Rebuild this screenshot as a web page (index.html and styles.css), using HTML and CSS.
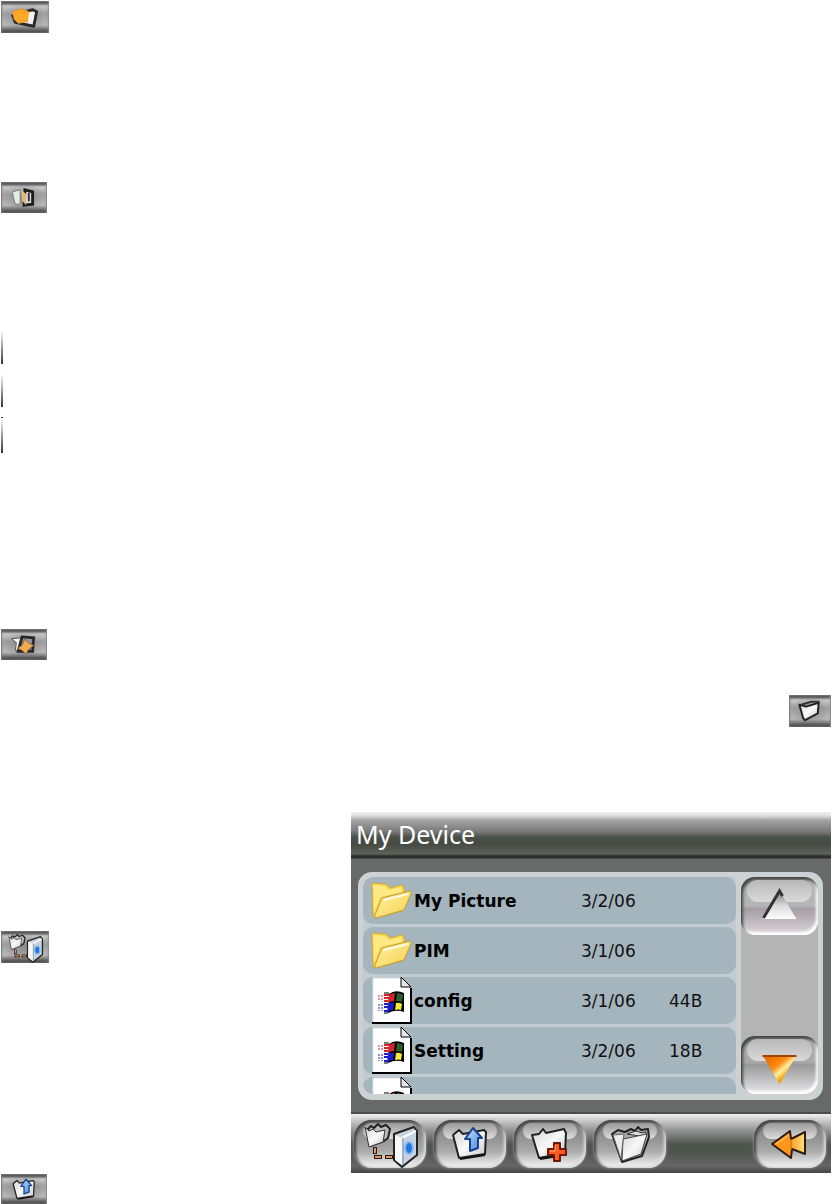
FILE: index.html
```html
<!DOCTYPE html>
<html lang="en">
<head>
  <meta charset="UTF-8">
  <meta name="viewport" content="width=device-width, initial-scale=1.0">
  <title>My Device</title>
  <link rel="stylesheet" href="styles.css">
</head>
<body>
  <!-- shared icon shapes -->
  <svg class="defs" width="0" height="0" aria-hidden="true">
    <defs>
      <linearGradient id="paper" x1="0" y1="0" x2="1" y2="1">
        <stop offset="0" stop-color="#d4d4d6"/>
        <stop offset="0.5" stop-color="#f8f8f8"/>
        <stop offset="1" stop-color="#c3c5c9"/>
      </linearGradient>
      <linearGradient id="blue" x1="0" y1="0" x2="1" y2="1">
        <stop offset="0" stop-color="#c4e0ff"/>
        <stop offset="1" stop-color="#4585da"/>
      </linearGradient>
      <linearGradient id="orange" x1="0" y1="0" x2="1" y2="0">
        <stop offset="0" stop-color="#ff9a1c"/>
        <stop offset="0.5" stop-color="#ff9418"/>
        <stop offset="1" stop-color="#ffe27a"/>
      </linearGradient>
      <linearGradient id="yellow" x1="0" y1="0" x2="1" y2="1">
        <stop offset="0" stop-color="#fff3a6"/>
        <stop offset="1" stop-color="#f5cf4c"/>
      </linearGradient>
      <linearGradient id="flame" x1="0" y1="0" x2="1" y2="1">
        <stop offset="0" stop-color="#e06000"/>
        <stop offset="0.4" stop-color="#ff8c10"/>
        <stop offset="0.55" stop-color="#fff0a0"/>
        <stop offset="0.7" stop-color="#f0a000"/>
      </linearGradient>
      <linearGradient id="silver" x1="0" y1="0" x2="0" y2="1">
        <stop offset="0" stop-color="#777"/>
        <stop offset="0.5" stop-color="#d8d8d8"/>
        <stop offset="1" stop-color="#fff"/>
      </linearGradient>
    </defs>
    <symbol id="folder" viewBox="0 0 42 47">
      <path d="M2 9Q1 7 3 6L16 7L20 11L31 8Q34 8 34 11L35 17L32 34L6 41Q3 41 3 38Z" fill="#f8d64c" stroke="#d0a63c"/>
      <path d="M3 8L15 9L19 13L31 10L32 15L10 20L4 36Z" fill="#ffe983"/>
      <path d="M12 21L40 14Q42 14 41 17L34 33L6 41Q4 41 5 38Z" fill="url(#yellow)" stroke="#c29a38"/>
      <path d="M14 23L38 17" fill="none" stroke="#fffbe0" stroke-width="2"/>
    </symbol>
    <symbol id="file" viewBox="0 0 42 47">
      <path d="M3 1H31L41 11V46H3Z" fill="#fff" stroke="#dde3e6"/>
      <path d="M2 46H41V11" fill="none" stroke="#000" stroke-width="2"/>
      <path d="M31 0V10H41Z" fill="#e5e5e5" stroke="#000"/>
      <path d="M19 17Q25 12 34 16V35Q26 32 18 36Z" fill="#000"/>
      <path d="M19 18Q22 16 25 16L24 24Q21 24 18 26Z" fill="#d8242c"/>
      <path d="M27 16Q30 16 33 18L32 25Q29 24 26 24Z" fill="#27602a"/>
      <path d="M18 27Q21 25 24 26L23 33Q20 33 17 35Z" fill="#1b1bd0"/>
      <path d="M26 26Q29 25 32 27L31 33Q28 32 25 33Z" fill="#f4ec3c"/>
      <path d="M9 18V24M12 18V24" stroke="#d8242c" stroke-width="1" stroke-dasharray="2 1"/>
      <path d="M9 27V34M12 27V34" stroke="#1b1bd0" stroke-width="1" stroke-dasharray="2 1"/>
      <path d="M14 18H19M14 21H19M14 24H18" stroke="#d8242c" stroke-width="2"/>
      <path d="M14 27H18M14 30H18M14 34H18" stroke="#1b1bd0" stroke-width="2"/>
      <path d="M14 16H19M14 36H18" stroke="#000"/>
    </symbol>
    <symbol id="explore" viewBox="0 0 72 48">
      <path d="M14 9L17 6L20 8L24 4L27 7L32 5L36 9L34 18L30 21L16 26Z" fill="#bbb" stroke="#222" stroke-width="2" stroke-linejoin="round"/>
      <path d="M11 7L15 11L19 9L22 12L31 10L29 22L15 27Z" fill="url(#paper)" stroke="#333"/>
      <path d="M21 27V34M20 37H28M31 37H39" stroke="#2a1a12" stroke-width="4"/>
      <path d="M21 28V33M21 37H27M32 37H38" stroke="#e09468" stroke-width="2"/>
      <path d="M40 14L60 7L63 11V35L48 47L40 40Z" fill="#c7d3e0" stroke="#222" stroke-width="2" stroke-linejoin="round"/>
      <path d="M41 15L48 18V45L41 40Z" fill="#f6f9fc"/>
      <path d="M48 18L62 11" stroke="#fff" stroke-width="2"/>
      <path d="M49 18V45" stroke="#7890a8"/>
      <ellipse cx="55" cy="28" rx="4" ry="6" fill="#1f7ae0" stroke="#8ab8ec" stroke-width="2"/>
    </symbol>
    <symbol id="up" viewBox="0 0 72 48">
      <path d="M19 15L25 10L29 14L50 10L52 12L51 34L25 38Z" fill="url(#paper)" stroke="#222" stroke-width="2" stroke-linejoin="round"/>
      <path d="M26 39L51 35" stroke="#111" stroke-width="2"/>
      <path d="M39 8L48 18H44V28L36 31V19H31Z" fill="url(#blue)" stroke="#15418e" stroke-width="2" stroke-linejoin="round"/>
    </symbol>
    <symbol id="new" viewBox="0 0 72 48">
      <path d="M18 15L25 14L29 9L32 13L50 9L52 13L51 33L25 38Z" fill="url(#paper)" stroke="#222" stroke-width="2" stroke-linejoin="round"/>
      <path d="M26 39L44 36" stroke="#111" stroke-width="2"/>
      <path d="M40 23H46V29H52V35H46V41H40V35H34V29H40Z" fill="#ff5a20" stroke="#6e1800" stroke-width="2" stroke-linejoin="round"/>
      <path d="M41 25V31H36" fill="none" stroke="#ffab70"/>
    </symbol>
    <symbol id="open" viewBox="0 0 72 48">
      <path d="M18 14L24 10L31 12L37 9L41 11L44 7L47 10L54 9L55 17L48 36L28 42Z" fill="#a8a8a8" stroke="#222" stroke-width="2" stroke-linejoin="round"/>
      <path d="M33 14L42 11L48 13L52 12L52 17Z" fill="#ddd" stroke="#333"/>
      <path d="M29 19L53 14L47 34L28 41Z" fill="url(#paper)" stroke="#444"/>
      <path d="M19 15L30 14L29 20L27 39Z" fill="#ececec" stroke="#666"/>
    </symbol>
    <symbol id="back" viewBox="0 0 72 48">
      <path d="M18 24L36 11L37 19L51 12V34L38 29L37 38Z" fill="url(#orange)" stroke="#2e1c10" stroke-width="2" stroke-linejoin="round"/>
      <path d="M22 24L35 15" stroke="#ffd48a" stroke-width="1"/>
      <path d="M37 19V30" stroke="#c26a10"/>
    </symbol>
    <symbol id="send" viewBox="0 0 48 32">
      <path d="M24 10L32 8L36 10L33 25L14 21L11 13" fill="#eee" stroke="#2c2824" stroke-width="3" stroke-linejoin="round"/>
      <path d="M11 10L20 7L28 10L27 20L17 22L13 18Z" fill="#ffa726" stroke="#d8923a" stroke-width="1"/>
      <path d="M28 11L34 10L32 21L27 20Z" fill="#f4f2ea"/>
    </symbol>
    <symbol id="copy" viewBox="0 0 48 32">
      <path d="M12 10L20 8V23H15L13 16Z" fill="#dff0df" stroke="#777"/>
      <path d="M25 8L33 10V23L24 24Z" fill="#ddd" stroke="#1c1c1c" stroke-width="3"/>
      <path d="M21 8L26 12V24L22 19Z" fill="#e8b878"/>
      <path d="M29 11V20" stroke="#333" stroke-width="2"/>
    </symbol>
    <symbol id="paste" viewBox="0 0 48 32">
      <path d="M11 10L21 9L19 23L15 22L16 14Z" fill="#f2f2f2" stroke="#555"/>
      <path d="M22 8L34 9L33 23L18 23Z" fill="#9a9a9a" stroke="#2a2a2a" stroke-width="3"/>
      <path d="M25 10L28 14L34 17L29 21L26 26L22 22L17 20L22 17Z" fill="#efad50" stroke="#8c6436"/>
    </symbol>
    <symbol id="page" viewBox="0 0 42 32">
      <path d="M10 9L17 11L30 7L29 18L16 25L14 23Z" fill="url(#paper)" stroke="#222" stroke-width="2" stroke-linejoin="round"/>
      <path d="M12 9L22 6L31 6" fill="none" stroke="#333" stroke-width="2"/>
    </symbol>
  </svg>

  <main class="page">
    <div class="side">
      <button class="thumb first" aria-label="Send"><svg><use href="#send"/></svg></button>
      <button class="thumb copy" aria-label="Copy"><svg><use href="#copy"/></svg></button>
      <div class="edges">
        <span class="edge"></span>
        <span class="edge"></span>
        <span class="edge tall"></span>
      </div>
      <button class="thumb paste" aria-label="Paste"><svg><use href="#paste"/></svg></button>
      <button class="thumb explore" aria-label="Explore"><svg><use href="#explore"/></svg></button>
      <button class="thumb parent" aria-label="Parent folder"><svg><use href="#up"/></svg></button>
    </div>

    <div class="content">
      <button class="thumb open" aria-label="Open"><svg><use href="#page"/></svg></button>

      <section class="device">
        <h1>My Device</h1>
        <div class="body">
          <div class="panel">
            <div class="list">
              <table>
                <tbody>
                  <tr>
                    <td class="icon"><svg><use href="#folder"/></svg></td>
                    <td class="name">My Picture</td>
                    <td class="date">3/2/06</td>
                    <td class="size"></td>
                  </tr>
                  <tr>
                    <td class="icon"><svg><use href="#folder"/></svg></td>
                    <td class="name">PIM</td>
                    <td class="date">3/1/06</td>
                    <td class="size"></td>
                  </tr>
                  <tr>
                    <td class="icon"><svg><use href="#file"/></svg></td>
                    <td class="name">config</td>
                    <td class="date">3/1/06</td>
                    <td class="size">44B</td>
                  </tr>
                  <tr>
                    <td class="icon"><svg><use href="#file"/></svg></td>
                    <td class="name">Setting</td>
                    <td class="date">3/2/06</td>
                    <td class="size">18B</td>
                  </tr>
                  <tr>
                    <td class="icon"><svg><use href="#file"/></svg></td>
                    <td class="name"></td>
                    <td class="date">3/1/06</td>
                    <td class="size"></td>
                  </tr>
                </tbody>
              </table>
            </div>
            <div class="scroll">
              <button class="scroll-up" aria-label="Scroll up">
                <svg viewBox="0 0 76 58"><path d="M38 14L55 42H21Z" fill="url(#silver)"/><path d="M22 41L38 14L41 19" fill="none" stroke="#333" stroke-width="3"/></svg>
              </button>
              <button class="scroll-down" aria-label="Scroll down">
                <svg viewBox="0 0 76 58"><path d="M21 19H55L38 48Z" fill="url(#flame)"/><path d="M21 20H55" stroke="#a04400" stroke-width="2"/></svg>
              </button>
            </div>
          </div>
        </div>
        <nav class="toolbar">
          <button class="tool" aria-label="Explore"><svg><use href="#explore"/></svg></button>
          <button class="tool" aria-label="Parent folder"><svg><use href="#up"/></svg></button>
          <button class="tool" aria-label="New folder"><svg><use href="#new"/></svg></button>
          <button class="tool" aria-label="Open"><svg><use href="#open"/></svg></button>
          <button class="tool back" aria-label="Back"><svg><use href="#back"/></svg></button>
        </nav>
      </section>
    </div>
  </main>
</body>
</html>
```
FILE: styles.css
```css
body {
  margin: 0;
  background: #fff;
  font-family: "DejaVu Sans", sans-serif;
}
button {
  border: none;
  padding: 0;
  cursor: pointer;
}
svg {
  display: block;
}
.defs {
  position: absolute;
}
.page {
  display: grid;
  grid-template-columns: 350px 1fr;
  padding: 1px 1px 0;
}
.side {
  display: flex;
  flex-direction: column;
  align-items: flex-start;
}

/* small buttons */
.thumb {
  width: 46px;
  height: 31px;
  background: radial-gradient(ellipse at 50% 55%, rgba(90, 90, 90, 0.4), transparent 70%), linear-gradient(#666 0, #555 2px, #c8c8c8 5px, #a2a2a2 40%, #bdbdbd 75%, #5c5c5c 92%, #444 100%);
  box-shadow: inset 1px 0 2px #777, inset -1px 0 2px #888;
}
.thumb svg {
  width: 100%;
  height: 31px;
}
.first,
.explore {
  width: 48px;
  height: 32px;
}
.copy {
  margin-top: 149px;
}
.edges {
  display: flex;
  flex-direction: column;
  gap: 10px;
  margin-top: 118px;
}
.edge {
  width: 2px;
  height: 33px;
  background: linear-gradient(#fff, #333);
}
.tall {
  height: 36px;
  border-top: 1px solid #333;
  box-sizing: border-box;
}
.paste {
  margin-top: 176px;
}
.explore {
  margin-top: 271px;
}
.parent {
  margin-top: 211px;
  height: 30px;
}

.content {
  display: flex;
  flex-direction: column;
}
.open {
  width: 42px;
  height: 32px;
  margin-top: 694px;
  align-self: flex-end;
}

/* file manager */
.device {
  margin-top: 85px;
}
.device h1 {
  margin: 0;
  padding-left: 5px;
  height: 47px;
  font-family: "Noto Sans", sans-serif;
  font-size: 25px;
  font-weight: 400;
  line-height: 44px;
  color: #fff;
  background: linear-gradient(#eee 0, #ddd 4px, #a5a5a5 8px, #777 20px, #4b5049 25px, #454b43 32px, #5c625b 42px, #2c302a 44px, #2c302a 46px, #666 47px);
}
.body {
  padding: 13px 8px 12px 7px;
  background: #686a69;
  border-bottom: 2px solid #4c4c4c;
}
.panel {
  display: flex;
  gap: 5px;
  padding: 5px 5px 6px;
  border-radius: 14px;
  background: #cdd1d3;
}
.list {
  flex: 1;
  height: 217px;
  overflow: hidden;
  border-radius: 10px 0 0 10px;
  background: #c1cbd0;
}
table {
  width: 100%;
  border-spacing: 0 3px;
  margin-top: -3px;
  font-size: 17px;
  color: #111;
}
td {
  height: 47px;
  padding: 0;
  background: #a5b5be;
}
.icon {
  width: 51px;
  padding-left: 7px;
  box-sizing: border-box;
  border-radius: 10px 0 0 10px;
}
.icon svg {
  width: 42px;
  height: 47px;
}
.name {
  font-weight: 700;
  color: #000;
}
.date {
  width: 88px;
}
.size {
  width: 67px;
  border-radius: 0 10px 10px 0;
}

.scroll {
  width: 77px;
  display: flex;
  flex-direction: column;
  justify-content: space-between;
  border-radius: 14px;
  background: #b4b4b4;
}
.scroll button {
  position: relative;
  height: 58px;
  border-radius: 14px;
  box-shadow: inset 2px 3px 3px #444, inset -2px -3px 3px #fff;
}
.scroll-up {
  background: linear-gradient(#b5b5b5 50%, #a49ea3 55%, #ddd7db);
}
.scroll-down {
  background: linear-gradient(#aaa 45%, #999 50%, #e8e8ec);
}
.scroll button::before,
.tool::before {
  content: "";
  position: absolute;
  top: 3px;
  left: 6px;
  right: 6px;
  height: 22px;
  border-radius: 12px;
  background: linear-gradient(#b8b8b8, #dadada);
}
.scroll svg {
  position: relative;
  width: 100%;
  height: 58px;
}

.toolbar {
  display: flex;
  gap: 8px;
  padding: 6px 5px 5px 3px;
  background: linear-gradient(#f2f2f2 0, #ccc 6px, #909090 17px, #4d554c 30px, #4d554c 38px, #666 52px, #444 59px);
}
.tool {
  position: relative;
  width: 72px;
  height: 48px;
  border-radius: 18px;
  background: linear-gradient(#777, #999 45%, #aaa 65%, #eee 95%);
  box-shadow: inset 2px 2px 3px #444, inset -2px -2px 3px #ddd, 0 0 3px #aaa;
}
.tool::before {
  left: 9px;
  right: 9px;
  height: 16px;
  background: linear-gradient(#999, #ddd);
}
.tool svg {
  position: relative;
  width: 100%;
  height: 48px;
}
.back {
  margin-left: auto;
}
```
